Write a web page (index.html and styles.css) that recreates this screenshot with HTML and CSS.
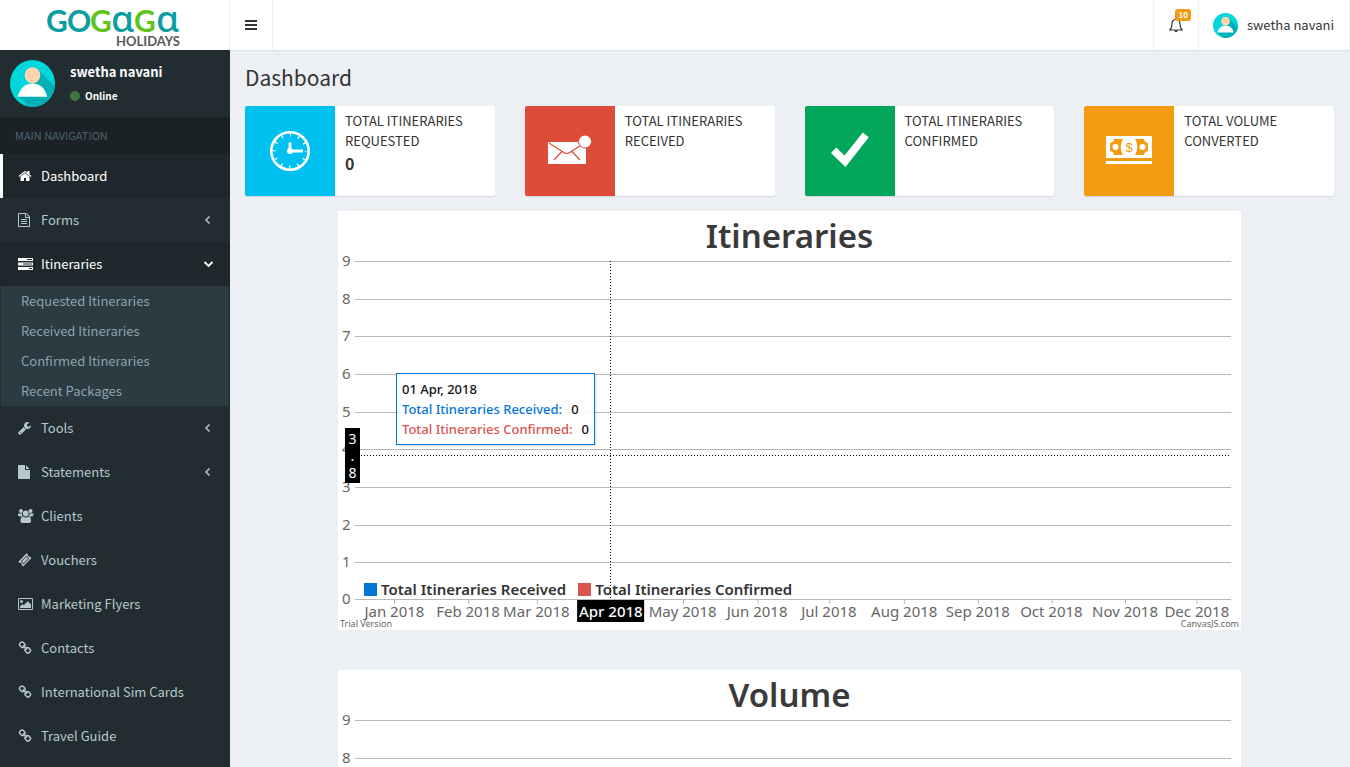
FILE: index.html
```html
<!DOCTYPE html>
<html lang="en">
<head>
<meta charset="utf-8">
<title>Dashboard</title>
<link rel="stylesheet" href="styles.css">
</head>
<body>
<svg class="defs" aria-hidden="true">
  <symbol id="i-link" viewBox="0 0 1792 1792"><path d="M1520 1216q0-40-28-68l-208-208q-28-28-68-28-42 0-72 32 3 3 19 18.500t21.500 21.500 15 19 13 25.500 3.500 27.500q0 40-28 68t-68 28q-15 0-27.500-3.500t-25.500-13-19-15-21.500-21.500-18.500-19q-33 31-33 73 0 40 28 68l206 207q27 27 68 27 40 0 68-26l147-146q28-28 28-67zm-703-705q0-40-28-68l-206-207q-28-28-68-28-39 0-68 27l-147 146q-28 28-28 67 0 40 28 68l208 208q27 27 68 27 42 0 72-31-3-3-19-18.500t-21.500-21.500-15-19-13-25.500-3.500-27.500q0-40 28-68t68-28q15 0 27.500 3.500t25.500 13 19 15 21.500 21.500 18.500 19q33-31 33-73zm895 705q0 120-85 203l-147 146q-83 83-203 83-121 0-204-85l-206-207q-83-83-83-203 0-123 88-209l-88-88q-86 88-208 88-120 0-204-84l-208-208q-84-84-84-204t85-203l147-146q83-83 203-83 121 0 204 85l206 207q83 83 83 203 0 123-88 209l88 88q86-88 208-88 120 0 204 84l208 208q84 84 84 204z"/></symbol>
  <symbol id="i-left" viewBox="0 0 14 14"><path d="M8.500 3.500 5 7l3.500 3.500" fill="none" stroke="currentColor" stroke-width="1.500"/></symbol>
  <symbol id="i-user" viewBox="0 0 46 46" preserveAspectRatio="none">
    <clipPath id="disc"><circle cx="23" cy="23" r="23"/></clipPath>
    <g clip-path="url(#disc)">
      <path fill="#00d7da" d="M0 0h46v46H0z"/>
      <path fill="#00b0b5" d="M28 9 46 26v20H20L8 36l14-14z"/>
      <circle cx="23" cy="15" r="8" fill="#ffd3ae"/>
      <path fill="#fff" d="M8 36c2-8 7-13 15-13s13 5 15 13z"/>
    </g>
  </symbol>
</svg>
<div class="app">
  <header class="topbar">
    <a class="logo" href="#" aria-label="Gogaga Holidays">
      <svg width="140" height="46" viewBox="0 0 140 46">
        <g class="logo-name">
          <text x="1" y="30" fill="#0a9ea0">G</text>
          <text x="22" y="30" fill="#0a9ea0">O</text>
          <text x="45" y="30" fill="#62c21e">G</text>
          <text class="logo-a" x="66" y="30" fill="#0a9ea0">ɑ</text>
          <text x="89" y="30" fill="#62c21e">G</text>
          <text class="logo-a" x="111" y="30" fill="#0a9ea0">ɑ</text>
        </g>
        <text class="logo-sub" x="135" y="44" text-anchor="end">HOLIDAYS</text>
      </svg>
    </a>
    <button class="toggle" aria-label="Toggle navigation">
      <svg width="12" height="12" viewBox="0 0 12 12"><path fill="currentColor" d="M0 1h12v2H0zM0 5h12v2H0zM0 9h12v2H0z"/></svg>
    </button>
    <button class="alerts" aria-label="Notifications">
      <svg width="14" height="15" viewBox="0 0 14 15"><path d="M7 1.500c-3 0-4 2.200-4 4.500 0 3.500-1 5-2.200 6h12.400C12 11 11 9.500 11 6c0-2.300-1-4.500-4-4.500z" fill="none" stroke="currentColor" stroke-width="1.200"/><path d="M6.300 0h1.400v2H6.300zM5.300 12.500h3.400c0 2.200-3.400 2.200-3.400 0z" fill="currentColor"/></svg>
      <span class="badge">10</span>
    </button>
    <a class="account" href="#">
      <svg width="25" height="25"><use href="#i-user"/></svg>
      <span>swetha navani</span>
    </a>
  </header>

  <aside class="sidebar">
    <div class="user">
      <svg width="45" height="47"><use href="#i-user"/></svg>
      <div class="user-info">
        <p>swetha navani</p>
        <a href="#"><i class="dot"></i>Online</a>
      </div>
    </div>
    <nav>
      <h2 class="nav-title">MAIN NAVIGATION</h2>
      <a class="item active" href="#"><svg class="icon" viewBox="0 0 1792 1792"><path d="M1472 992v480q0 26-19 45t-45 19h-384v-384h-256v384h-384q-26 0-45-19t-19-45v-480q0-1 .5-3t.5-3l575-474 575 474q1 2 1 6zm223-69l-62 74q-8 9-21 11h-3q-13 0-21-7l-692-577-692 577q-12 8-24 7-13-2-21-11l-62-74q-8-10-7-23.500t11-21.500l719-599q32-26 76-26t76 26l244 204v-195q0-14 9-23t23-9h192q14 0 23 9t9 23v408l219 182q10 8 11 21.500t-7 23.500z"/></svg>Dashboard</a>
      <a class="item" href="#"><svg class="icon" viewBox="128 0 1792 1792"><path d="M1596 380q28 28 48 76t20 88v1152q0 40-28 68t-68 28h-1344q-40 0-68-28t-28-68v-1600q0-40 28-68t68-28h896q40 0 88 20t76 48zm-444-244v376h376q-10-29-22-41l-313-313q-12-12-41-22zm384 1528v-1024h-416q-40 0-68-28t-28-68v-416h-768v1536h1280zm-1024-864q0-14 9-23t23-9h704q14 0 23 9t9 23v64q0 14-9 23t-23 9h-704q-14 0-23-9t-9-23v-64zm736 224q14 0 23 9t9 23v64q0 14-9 23t-23 9h-704q-14 0-23-9t-9-23v-64q0-14 9-23t23-9h704zm0 256q14 0 23 9t9 23v64q0 14-9 23t-23 9h-704q-14 0-23-9t-9-23v-64q0-14 9-23t23-9h704z"/></svg>Forms<svg class="caret"><use href="#i-left"/></svg></a>
      <a class="item open" href="#"><svg class="icon wide" viewBox="0 0 16 14"><path fill-rule="evenodd" d="M0 1h15v3H0zM9 2v1h5V2zM0 5.500h15v3H0zM5 6.500v1h9v-1zM0 10h15v3H0zM11 11v1h3v-1z"/></svg>Itineraries<svg class="caret" viewBox="0 0 14 14"><path d="M3.500 5 7.500 9l4-4" fill="none" stroke="currentColor" stroke-width="1.800"/></svg></a>
      <div class="submenu">
        <a href="#">Requested Itineraries</a>
        <a href="#">Received Itineraries</a>
        <a href="#">Confirmed Itineraries</a>
        <a href="#">Recent Packages</a>
      </div>
      <a class="item" href="#"><svg class="icon" viewBox="64 0 1792 1792"><path d="M448 1472q0-26-19-45t-45-19-45 19-19 45 19 45 45 19 45-19 19-45zm644-420l-682 682q-37 37-90 37-52 0-91-37l-106-108q-38-36-38-90 0-53 38-91l681-681q39 98 114.500 173.500t173.500 114.500zm634-435q0 39-23 106-47 134-164.500 217.500t-258.500 83.500q-185 0-316.500-131.500t-131.500-316.500 131.500-316.500 316.500-131.500q58 0 121.500 16.500t107.500 46.500q16 11 16 28t-16 28l-293 169v224l193 107q5-3 79-48.500t135.500-81 70.500-35.500q15 0 23.500 10t8.500 25z"/></svg>Tools<svg class="caret"><use href="#i-left"/></svg></a>
      <a class="item" href="#"><svg class="icon" viewBox="128 0 1792 1792"><path d="M1152 512v-472q22 14 36 28l408 408q14 14 28 36h-472zm-128 32q0 40 28 68t68 28h544v1056q0 40-28 68t-68 28h-1344q-40 0-68-28t-28-68v-1600q0-40 28-68t68-28h800v544z"/></svg>Statements<svg class="caret"><use href="#i-left"/></svg></a>
      <a class="item" href="#"><svg class="icon wide" viewBox="0 0 16 14"><circle cx="3" cy="2" r="2"/><circle cx="12.500" cy="2" r="2"/><path d="M0 4.500h4.200c-.4 1.200 0 2.300.6 3H1.600C.4 7.500 0 6.500 0 4.500zM15.500 4.500h-4.200c.4 1.200 0 2.300-.6 3h3.200c1.200 0 1.600-1 1.600-3z"/><circle cx="7.750" cy="4.500" r="2.900"/><path d="M2.500 12c0-2.500.8-4.400 2.500-4.400 1.700 1.200 3.800 1.200 5.500 0 1.700 0 2.500 1.900 2.500 4.400 0 1.500-.8 2-2 2H4.500c-1.200 0-2-.5-2-2z"/></svg>Clients</a>
      <a class="item" href="#"><svg class="icon" viewBox="0 0 14 14"><path fill-rule="evenodd" d="M.3 8.700 8.700.3l1.200 1.200c-.4 1.400.8 2.600 2.200 2.200l1.400 1.400-8.400 8.400-1.400-1.400c.4-1.400-.8-2.600-2.200-2.200zM2.800 8.500 5.500 11.200 11.200 5.500 8.500 2.800zM3.800 8.500 8.500 3.800 10.200 5.500 5.500 10.200z"/></svg>Vouchers</a>
      <a class="item" href="#"><svg class="icon wide" viewBox="0 0 1920 1792"><path d="M576 576q0 80-56 136t-136 56-136-56-56-136 56-136 136-56 136 56 56 136zm1024 384v448h-1408v-192l320-320 160 160 512-512zm96-704h-1600q-13 0-22.500 9.500t-9.500 22.500v1216q0 13 9.500 22.500t22.500 9.500h1600q13 0 22.500-9.500t9.500-22.500v-1216q0-13-9.500-22.500t-22.500-9.500zm160 32v1216q0 66-47 113t-113 47h-1600q-66 0-113-47t-47-113v-1216q0-66 47-113t113-47h1600q66 0 113 47t47 113z"/></svg>Marketing Flyers</a>
      <a class="item" href="#"><svg class="icon"><use href="#i-link"/></svg>Contacts</a>
      <a class="item" href="#"><svg class="icon"><use href="#i-link"/></svg>International Sim Cards</a>
      <a class="item" href="#"><svg class="icon"><use href="#i-link"/></svg>Travel Guide</a>
    </nav>
  </aside>

  <main class="content">
    <h1>Dashboard</h1>
    <section class="cards">
      <article class="card">
        <div class="card-icon aqua"><svg width="46" height="46" viewBox="0 0 46 46"><circle cx="23" cy="23" r="18.700" fill="none" stroke="#fff" stroke-width="2.600"/><circle cx="23" cy="23" r="16" fill="none" stroke="#fff" stroke-width="3" stroke-dasharray="1.200 7.178" stroke-dashoffset=".6"/><path d="M23 14.500V23h13" fill="none" stroke="#fff" stroke-width="2.800"/><circle cx="23" cy="23" r="3" fill="#fff"/></svg></div>
        <div class="card-text"><p>TOTAL ITINERARIES REQUESTED</p><strong>0</strong></div>
      </article>
      <article class="card">
        <div class="card-icon red"><svg width="46" height="46" viewBox="0 0 46 46"><rect x="1" y="14" width="38" height="22" rx="1" fill="#fff"/><path d="M2 15l14 9c2.500 2 5 2 7.500 0l14-9M7 32l8-8.500M33 32l-8-8.500" fill="none" stroke="#dd4b39" stroke-width="1.200"/><circle cx="38" cy="13.500" r="6.500" fill="#fff" stroke="#dd4b39"/></svg></div>
        <div class="card-text"><p>TOTAL ITINERARIES RECEIVED</p></div>
      </article>
      <article class="card">
        <div class="card-icon green"><svg width="46" height="46" viewBox="0 0 46 46"><path fill="#fff" d="M4 25 9.300 19.500l8.200 8L35.800 4.500l6 4.700L18.500 39z"/></svg></div>
        <div class="card-text"><p>TOTAL ITINERARIES CONFIRMED</p></div>
      </article>
      <article class="card">
        <div class="card-icon yellow"><svg width="46" height="46" viewBox="0 0 46 46"><path fill="#fff" d="M0 8h46v22H0zM0 33h46v3H0z"/><path fill="#f39c12" d="M8 11h9c-3 5-3 11 0 16H8c0-2-1.500-3.500-4-4v-8c2.500-.5 4-2 4-4zM38 11h-9c3 5 3 11 0 16h9c0-2 1.500-3.500 4-4v-8c-2.500-.5-4-2-4-4z"/><circle cx="9.500" cy="19" r="3" fill="#fff"/><circle cx="36.500" cy="19" r="3" fill="#fff"/><text class="dollar" x="23" y="24" text-anchor="middle">$</text></svg></div>
        <div class="card-text"><p>TOTAL VOLUME CONVERTED</p></div>
      </article>
    </section>

    <section class="charts">
      <figure class="chart">
        <h2>Itineraries</h2>
        <div class="plot">
          <div class="row"><span>9</span></div><div class="row"><span>8</span></div><div class="row"><span>7</span></div><div class="row"><span>6</span></div><div class="row"><span>5</span></div><div class="row"><span>4</span></div><div class="row"><span>3</span></div><div class="row"><span>2</span></div><div class="row last"><span>1</span></div>
          <span class="zero">0</span>
          <div class="legend"><span><i class="blue"></i>Total Itineraries Received</span><span><i class="rose"></i>Total Itineraries Confirmed</span></div>
          <div class="cross-x"></div>
          <div class="cross-y"></div>
          <div class="y-tag"><span>3</span><span>.</span><span>8</span></div>
          <div class="tooltip">
            <div>01 Apr, 2018</div>
            <div><span class="t-blue">Total Itineraries Received:</span>0</div>
            <div><span class="t-rose">Total Itineraries Confirmed:</span>0</div>
          </div>
        </div>
        <div class="months">
          <span style="left:4.5%">Jan 2018</span><span style="left:12.9%">Feb 2018</span><span style="left:20.7%">Mar 2018</span><span class="current" style="left:29.2%">Apr 2018</span><span style="left:37.4%">May 2018</span><span style="left:45.9%">Jun 2018</span><span style="left:54.1%">Jul 2018</span><span style="left:62.7%">Aug 2018</span><span style="left:71.1%">Sep 2018</span><span style="left:79.5%">Oct 2018</span><span style="left:87.9%">Nov 2018</span><span style="left:96.1%">Dec 2018</span>
        </div>
        <figcaption><span>Trial Version</span><a href="#">CanvasJS.com</a></figcaption>
      </figure>
      <figure class="chart">
        <h2>Volume</h2>
        <div class="plot">
          <div class="row"><span>9</span></div><div class="row"><span>8</span></div><div class="row"><span>7</span></div><div class="row"><span>6</span></div><div class="row"><span>5</span></div><div class="row"><span>4</span></div><div class="row"><span>3</span></div><div class="row"><span>2</span></div><div class="row last"><span>1</span></div>
        </div>
      </figure>
    </section>
  </main>
</div>
</body>
</html>
```
FILE: styles.css
```css
* { box-sizing: border-box; }
body, h1, h2, p, figure { margin: 0; }
body { font-family: "Noto Sans CJK SC", sans-serif; font-size: 13px; line-height: 20px; color: #333; background: #ecf0f5; }
a { color: inherit; text-decoration: none; }
button { border: 0; background: none; padding: 0; color: inherit; font: inherit; }
svg { display: block; flex: none; }
.defs { position: absolute; width: 0; height: 0; }

.app { display: grid; grid-template: 50px 1fr / 230px 1fr; height: 100vh; overflow: hidden; }

.topbar { grid-column: 1 / -1; display: flex; background: #fff; border-right: 1px solid #eee; box-shadow: 0 1px 1px rgba(0, 0, 0, .06); z-index: 1; }
.logo { width: 230px; border-right: 1px solid #eee; display: flex; justify-content: center; align-items: flex-end; padding-bottom: 2px; }
.logo svg { overflow: visible; }
.logo-name { font-family: Lato, sans-serif; font-size: 30px; font-weight: 700; }
.logo-a { font-family: "Noto Sans", sans-serif; font-size: 37px; font-weight: 500; }
.logo-sub { font-family: Lato, sans-serif; font-size: 13px; font-weight: 700; fill: #58595b; }
.toggle { width: 43px; border-right: 1px solid #eee; display: grid; place-items: center; }
.alerts { position: relative; width: 46px; margin-left: auto; border: solid #eee; border-width: 0 1px; display: grid; place-items: center; }
.badge { position: absolute; top: 9px; right: 7px; padding: 0 3px; border-radius: 3px; background: #f39c12; color: #fff; font-size: 8px; font-weight: 700; line-height: 12px; }
.account { display: flex; align-items: center; gap: 9px; padding: 0 15px 0 14px; }

.sidebar { background: #222d32; color: #b8c7ce; overflow: hidden; }
.user { display: flex; gap: 15px; padding: 10px; color: #fff; font-weight: 700; }
.user-info { display: flex; flex-direction: column; gap: 4px; padding-top: 2px; }
.user-info a { display: flex; align-items: center; gap: 5px; font-size: 10px; }
.dot { width: 10px; height: 10px; border-radius: 50%; background: #3c763d; }
.nav-title { padding: 8px 15px 9px; background: #1a2226; color: #4b646f; font-size: 11px; font-weight: 400; line-height: 20px; }
.item { display: flex; align-items: center; padding: 12px 15px; border-left: 3px solid transparent; }
.item.active, .item.open { background: #1e282c; color: #fff; }
.item.active { border-left-color: #fff; }
.icon { width: 14px; height: 14px; margin-right: 9px; fill: currentColor; }
.icon.wide { width: 16px; margin-right: 7px; }
.caret { width: 14px; height: 14px; margin-left: auto; }
.submenu { margin: 0 1px; background: #2c3b41; color: #8aa4af; }
.submenu a { display: block; padding: 5px 20px; }

.content { padding: 14px 16px 0 15px; overflow-y: auto; scrollbar-width: none; }
h1 { font-size: 21px; font-weight: 400; line-height: 26px; }
.cards { display: grid; grid-template-columns: repeat(4, 1fr); gap: 30px; margin: 16px 0 15px; }
.card { display: flex; min-height: 90px; border-radius: 2px; overflow: hidden; background: #fff; box-shadow: 0 1px 1px rgba(0, 0, 0, .1); }
.card-icon { flex: none; width: 90px; display: grid; place-items: center; }
.aqua { background: #00c0ef; }
.red { background: #dd4b39; }
.green { background: #00a65a; }
.yellow { background: #f39c12; }
.dollar { font-family: "Liberation Sans", sans-serif; font-size: 13px; fill: #f39c12; }
.card-text { padding: 5px 10px; }
.card-text strong { display: block; font-size: 16px; line-height: 25px; }

.charts { display: grid; gap: 40px; padding: 0 93px; }
.chart { background: #fff; font-family: "Noto Sans", sans-serif; font-size: 15px; color: #666; }
.chart h2 { height: 50px; color: #3a3a3a; font-size: 33px; font-weight: 600; line-height: 50px; text-align: center; }
.plot { position: relative; margin: 0 10px 0 17px; }
.row { height: 38px; border-top: 1px solid #b9b9b9; }
.row:nth-child(3n + 2) { height: 37px; }
.row.last { border-bottom: 1px solid #b9b9b9; }
.row span, .zero { position: absolute; left: -13px; margin-top: -12px; }
.legend { position: absolute; left: 9px; bottom: 1px; display: flex; gap: 12px; color: #333; font-size: 15px; font-weight: 600; }
.legend span { display: flex; align-items: center; gap: 4px; }
.legend i { width: 13px; height: 13px; }
.blue { background: #0275d8; }
.rose { background: #d9534f; }
.cross-x { position: absolute; left: 29.1%; top: 0; bottom: 0; width: 1px; background: repeating-linear-gradient(#000 0 1px, transparent 1px 3px); }
.cross-y { position: absolute; top: 57.1%; left: 0; right: 0; height: 1px; background: repeating-linear-gradient(90deg, #000 0 1px, transparent 1px 3px); }
.y-tag { position: absolute; left: -10px; top: 167px; width: 15px; padding: 2px 0; background: #000; color: #fff; font-size: 14px; line-height: 17px; text-align: center; display: grid; }
.tooltip { position: absolute; left: 41px; top: 112px; padding: 5px; border: 1px solid #0275d8; background: rgba(255, 255, 255, .9); box-shadow: 1px 1px 2px rgba(0, 0, 0, .15); color: #111; font-size: 13px; font-weight: 500; white-space: nowrap; }
.tooltip span { margin-right: 9px; }
.t-blue { color: #0275d8; }
.t-rose { color: #d9534f; }
.months { position: relative; height: 20px; margin: 0 10px 0 17px; }
.months span { position: absolute; transform: translateX(-50%); padding: 1px 2px; line-height: 20px; white-space: nowrap; }
.months span::before { content: ""; position: absolute; left: 50%; top: 0; height: 4px; border-left: 1px solid #b9b9b9; }
.months .current { background: #000; color: #fff; font-weight: 500; }
.months .current::before { display: none; }
figcaption { display: flex; justify-content: space-between; height: 10px; padding: 0 2px; font-size: 9px; line-height: 8px; }
```
